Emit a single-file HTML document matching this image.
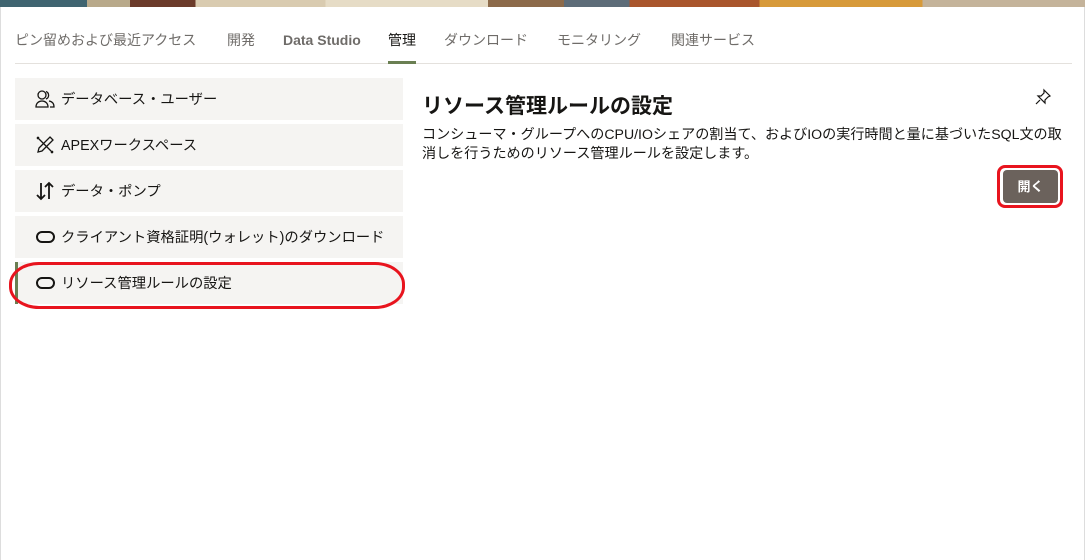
<!DOCTYPE html>
<html><head><meta charset="utf-8"><style>
*{margin:0;padding:0;box-sizing:border-box}
body{width:1085px;height:560px;background:#fff;font-family:"Liberation Sans","Noto Sans CJK JP",sans-serif;position:relative;overflow:hidden;color:#161513}
.banner{position:absolute;left:0;top:0;width:1085px;height:7px;background:linear-gradient(90deg,#3f6470 0 8%,#b8a98a 8% 12%,#6b3b2a 12% 18%,#d9cbb0 18% 30%,#e6dcc6 30% 45%,#8c6a4a 45% 52%,#5d6c78 52% 58%,#a9552c 58% 70%,#d79a3a 70% 85%,#c4b39a 85% 100%)}
.edge{position:absolute;left:0;top:7px;width:1px;height:553px;background:#ddd}
.redge{position:absolute;right:0;top:7px;width:1px;height:553px;background:#ddd}
.tabs{position:absolute;left:15px;top:30px;font-size:14px;color:#6f6c69;white-space:nowrap}
.tabs span{position:absolute;top:0;line-height:20px;height:20px}
.divider{position:absolute;left:15px;top:63px;width:1057px;height:1px;background:#e4e1dd}
.ul{position:absolute;left:388px;top:61px;width:28px;height:3px;background:#6a7f52}
.item{position:absolute;left:15px;width:388px;height:42px;background:#f5f4f2;font-size:14.3px}
.item .t{position:absolute;left:46px;top:12px;white-space:nowrap;line-height:20px}
.item svg{position:absolute;left:20px;top:11px}
.sel{border-left:3px solid #6a7f52}
h1{position:absolute;left:422px;top:93px;font-size:21px;font-weight:bold;line-height:28px}
.desc{position:absolute;left:422px;top:125px;font-size:14.1px;line-height:19px;color:#161513;white-space:nowrap}
.btn{position:absolute;left:1003px;top:170px;width:55px;height:33px;background:#6b625c;color:#fff;font-size:13px;font-weight:bold;text-align:center;line-height:33px;border-radius:4px}
.rb{position:absolute;left:997px;top:165px;width:66px;height:43px;border:3px solid #e8141e;border-radius:8px}
.re{position:absolute;left:9px;top:262px;width:396px;height:47px;border:3px solid #e8141e;border-radius:30px/22px}
</style></head><body>
<div class="banner"></div><div class="edge"></div><div class="redge"></div>
<div class="tabs">
<span style="left:0">ピン留めおよび最近アクセス</span>
<span style="left:212px">開発</span>
<span style="left:268px;font-weight:bold;color:#6f6c69">Data Studio</span>
<span style="left:373px;color:#161513">管理</span>
<span style="left:429px">ダウンロード</span>
<span style="left:542px">モニタリング</span>
<span style="left:656px">関連サービス</span>
</div>
<div class="divider"></div><div class="ul"></div>

<div class="item" style="top:78px"><svg width="20" height="20" viewBox="0 0 20 20" fill="none" stroke="#161513" stroke-width="1.3"><circle cx="7" cy="6" r="4"/><path d="M1 18c0-4 3-6 6-6s6 2 6 6z"/><path d="M11 2.5a4 4 0 0 1 0 7.5M14 12c3 .5 5 2.5 5 6h-4"/></svg><span class="t">データベース・ユーザー</span></div>
<div class="item" style="top:124px"><svg width="20" height="20" viewBox="0 0 20 20" fill="none" stroke="#161513" stroke-width="1.3"><path d="M2 2l16 16M4 2l-2 2M18 16l-2 2"/><path d="M15 2l3 3-11 11-4 1 1-4z"/></svg><span class="t">APEXワークスペース</span></div>
<div class="item" style="top:170px"><svg width="20" height="20" viewBox="0 0 20 20" fill="none" stroke="#161513" stroke-width="1.8"><path d="M6 2v16M2 14l4 4 4-4M14 18V2M10 6l4-4 4 4"/></svg><span class="t">データ・ポンプ</span></div>
<div class="item" style="top:216px"><svg width="20" height="20" viewBox="0 0 20 20" fill="none" stroke="#161513" stroke-width="2"><rect x="2" y="5" width="17" height="10" rx="5"/></svg><span class="t">クライアント資格証明(ウォレット)のダウンロード</span></div>
<div class="item sel" style="top:262px"><svg width="20" height="20" viewBox="0 0 20 20" fill="none" stroke="#161513" stroke-width="2" style="left:17px"><rect x="2" y="5" width="17" height="10" rx="5"/></svg><span class="t" style="left:43px">リソース管理ルールの設定</span></div>
<div class="re"></div>

<h1>リソース管理ルールの設定</h1>
<svg style="position:absolute;left:1034px;top:88px" width="18" height="18" viewBox="0 0 18 18" fill="none" stroke="#161513" stroke-width="1.2"><path d="M10 2l6 6-2 1-3 3 0 3-7-7 3 0 3-3z"/><path d="M6 12l-4 4"/></svg>
<div class="desc">コンシューマ・グループへのCPU/IOシェアの割当て、およびIOの実行時間と量に基づいたSQL文の取<br>消しを行うためのリソース管理ルールを設定します。</div>
<div class="btn">開く</div><div class="rb"></div>
</body></html>
